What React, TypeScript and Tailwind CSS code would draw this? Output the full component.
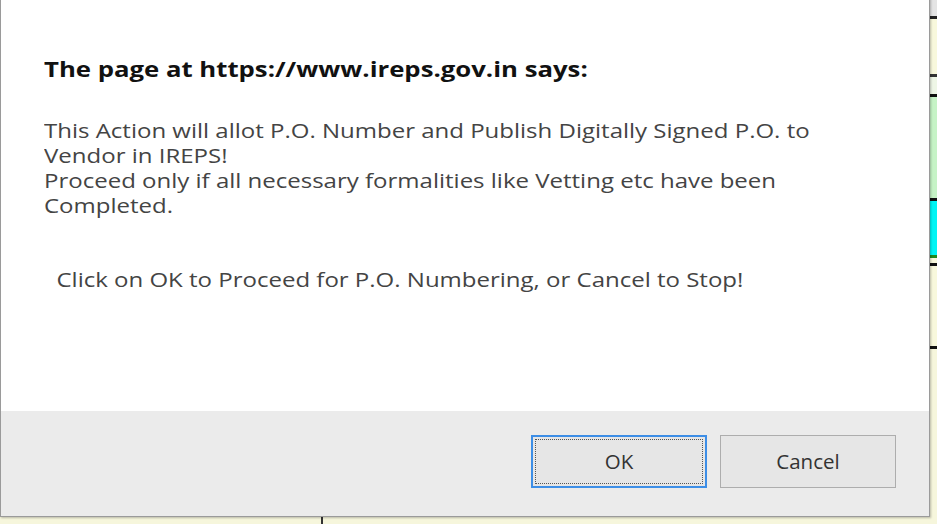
import React from 'react';

const stripes = [
  { h: 'h-[16px]', c: 'bg-[#e4e4e4]' },
  { h: 'h-[3px]', c: 'bg-[#222222]' },
  { h: 'h-[55px]', c: 'bg-[#f8f8dc]' },
  { h: 'h-[3px]', c: 'bg-[#333333]' },
  { h: 'h-[17px]', c: 'bg-[#eef6e6]' },
  { h: 'h-[3px]', c: 'bg-[#111111]' },
  { h: 'h-[101px]', c: 'bg-[#c6f3c6]' },
  { h: 'h-[3px]', c: 'bg-[#111111]' },
  { h: 'h-[54px]', c: 'bg-[#00f5f5]' },
  { h: 'h-[3px]', c: 'bg-[#1f8a1f]' },
  { h: 'h-[5px]', c: 'bg-[#f8f8dc]' },
  { h: 'h-[3px]', c: 'bg-[#111111]' },
  { h: 'h-[80px]', c: 'bg-[#f8f8dc]' },
  { h: 'h-[3px]', c: 'bg-[#111111]' },
];

const App: React.FC = () => {
  return (
    <div className="relative w-[937px] h-[524px] overflow-hidden bg-[#f6f6dc]">
      {/* page behind the dialog */}
      <div className="flex justify-end h-full">
        <div className="w-[7px] flex flex-col">
          {stripes.map((s, i) => (
            <div key={i} className={`${s.h} ${s.c}`} />
          ))}
        </div>
      </div>
      <div className="absolute left-[321px] top-[515px] w-[2px] h-[9px] bg-[#333333]" />

      {/* confirm dialog */}
      <div
        className="absolute left-0 -top-[10px] w-[930px] h-[527px] flex flex-col bg-white border border-[#9a9a9a] shadow-[1px_1px_2px_rgba(0,0,0,0.25)]"
        style={{ fontFamily: '"Open Sans", "Noto Sans", sans-serif' }}
      >
        <div className="flex-1 pl-[43px] pt-[65px]">
          <h2 className="text-[20.5px] leading-[27px] font-bold text-[#111111] whitespace-pre origin-left scale-x-[1.255]">
            The page at https://www.ireps.gov.in says:
          </h2>
          <div className="mt-[35px] text-[20px] leading-[25px] text-[#444444] whitespace-pre origin-left scale-x-[1.2]">
            <div>This Action will allot P.O. Number and Publish Digitally Signed P.O. to</div>
            <div>Vendor in IREPS!</div>
            <div>Proceed only if all necessary formalities like Vetting etc have been</div>
            <div>Completed.</div>
            <div className="mt-[49px]">{'  Click on OK to Proceed for P.O. Numbering, or Cancel to Stop!'}</div>
          </div>
        </div>

        {/* footer with buttons */}
        <div className="h-[105px] shrink-0 bg-[#ebebeb] flex justify-end items-start pt-[24px] pr-[33px] gap-[13px]">
          <button className="w-[176px] h-[53px] bg-[#e6e6e6] border-2 border-[#3d8ee6] p-[2px] text-[20.5px] text-[#333333]">
            <span className="flex items-center justify-center w-full h-full border border-dotted border-[#555555]">
              OK
            </span>
          </button>
          <button className="w-[176px] h-[53px] bg-[#e6e6e6] border border-[#adadad] text-[20.5px] text-[#333333]">
            Cancel
          </button>
        </div>
      </div>
    </div>
  );
};

export default App;
